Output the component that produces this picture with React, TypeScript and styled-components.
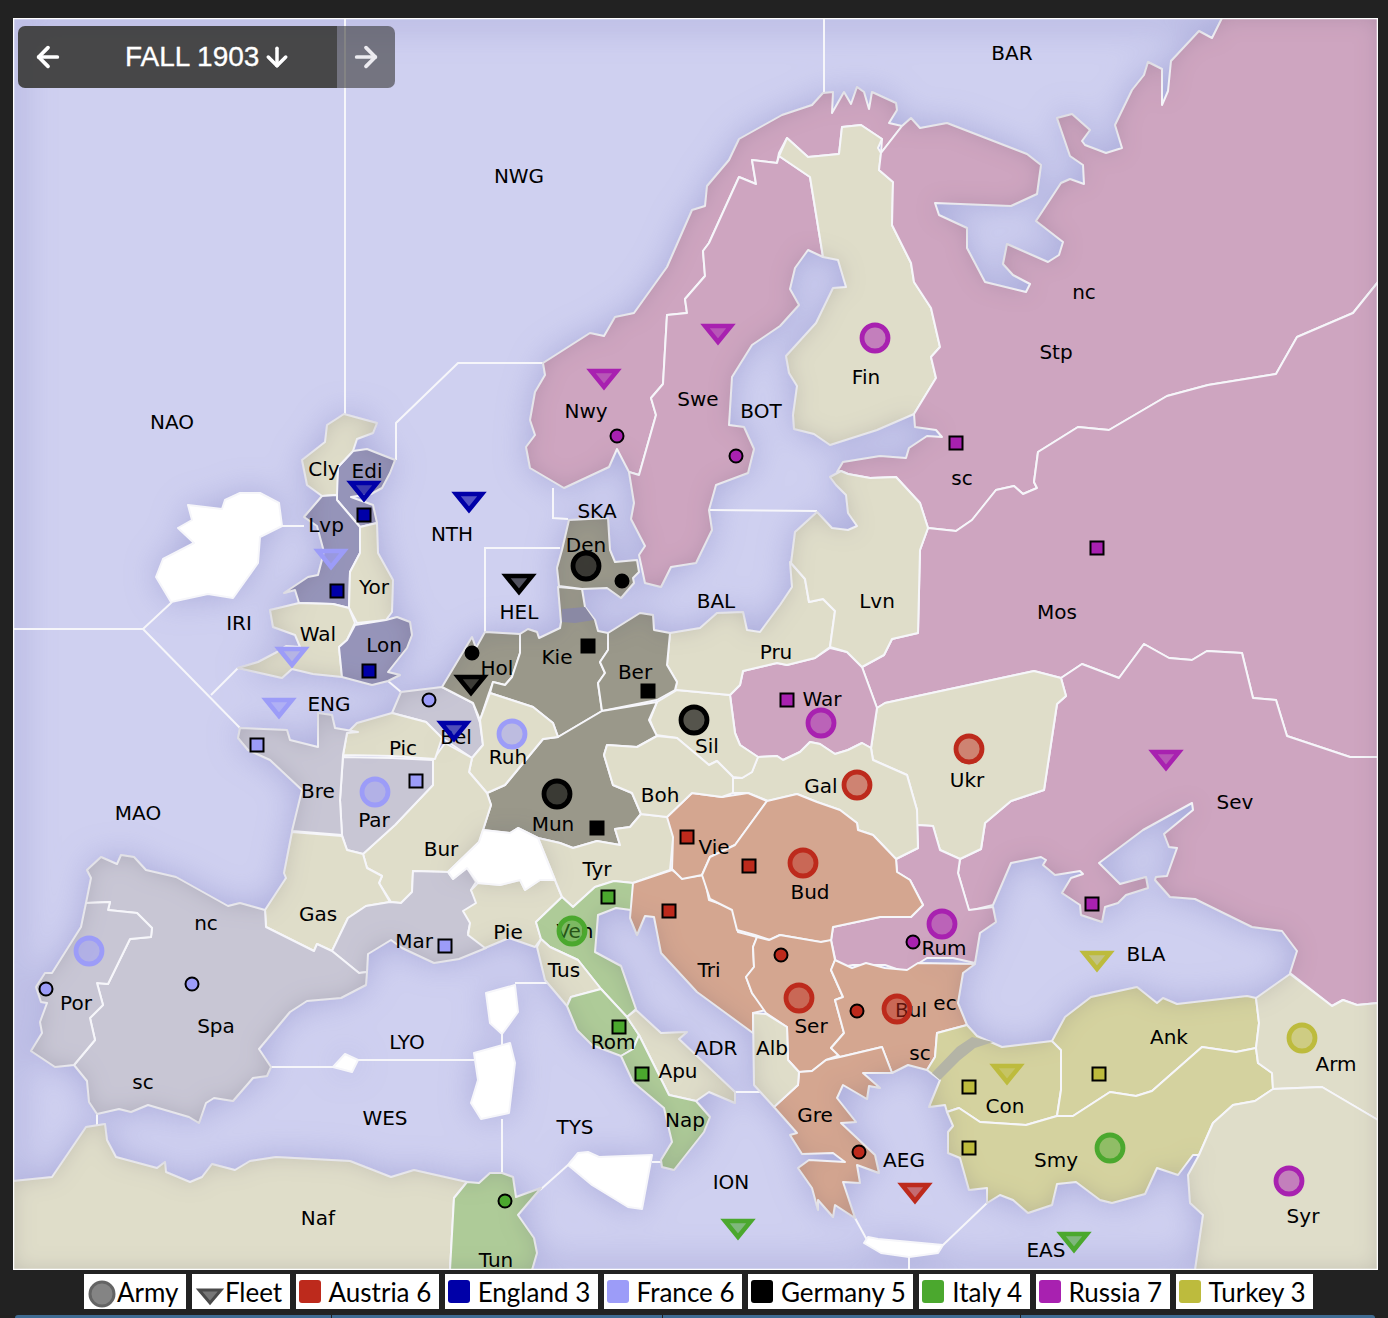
import React from "react";
import styled, { createGlobalStyle } from "styled-components";
import { ArrowDown, ArrowLeft, ArrowRight } from "lucide-react";

const COLORS: Record<string, string> = {
  none: "#dfddc9", rus: "#cea5c0", aus: "#d4a690", ger: "#9a988a", eng: "#9694b9",
  fra: "#c8c6d4", ita: "#aecb98", tur: "#d4d29f",
};
const POWER: Record<string, string> = {
  aus: "#bd2a1c", eng: "#0000a8", fra: "#9c9cf8", ger: "#000000", ita: "#4ba82e", rus: "#a821b0", tur: "#bdbb3d",
};

const PROVINCES: [string, string][] = [
  ["rus", "543,363 590,333 604,336 615,317 634,313 667,267 692,210 705,206 707,186 729,160 739,139 782,115 812,105 823,93 833,92 832,113 844,92 851,104 857,87 864,92 869,109 872,92 896,103 897,110 889,123 902,126 881,153 882,139 861,125 842,127 839,154 808,157 787,138 779,153 777,163 752,160 756,184 739,177 709,243 703,251 705,276 685,299 687,313 667,315 663,384 651,398 656,415 639,475 629,472 617,449 609,467 564,488 530,468 526,447 535,435 530,420 535,392 545,375"],
  ["rus", "779,156 810,177 823,257 808,250 795,268 790,289 799,305 780,326 752,345 732,377 729,425 744,427 754,449 748,473 716,485 709,510 712,530 696,563 671,567 661,587 645,583 639,555 645,546 631,519 634,503 629,472 639,475 656,415 651,398 663,384 667,315 687,313 685,299 705,276 703,251 709,243 739,177 756,184 752,160 777,163"],
  ["none", "787,138 808,157 839,154 842,127 861,125 882,139 878,148 881,153 879,170 893,182 892,225 911,263 914,282 931,308 940,347 931,357 936,378 914,414 877,430 830,445 814,434 794,429 793,415 797,386 789,373 786,356 816,323 833,288 846,287 838,260 823,257 810,177 779,156"],
  ["rus", "902,126 911,118 920,128 947,123 1027,154 1041,165 1037,194 1011,206 935,203 939,215 967,228 967,248 985,282 1026,292 1030,284 1013,275 1003,264 1007,244 1048,262 1059,255 1063,242 1036,221 1061,183 1070,179 1084,184 1083,165 1070,156 1057,118 1072,114 1090,130 1082,141 1085,145 1106,153 1122,148 1115,125 1132,90 1144,75 1148,62 1162,69 1162,105 1168,91 1171,61 1199,31 1212,38 1222,18 1378,18 1378,282 1353,313 1297,337 1276,374 1208,385 1167,396 1109,430 1078,427 1038,452 1034,482 1037,488 1023,494 1014,486 996,490 972,520 956,531 928,528 920,503 896,477 870,478 848,474 841,471 837,472 843,462 880,456 906,458 909,448 927,436 942,437 936,430 915,427 914,414 936,378 931,357 940,347 931,308 914,282 911,263 892,225 893,182 879,170 881,153"],
  ["rus", "928,528 956,531 972,520 996,490 1014,486 1023,494 1037,488 1034,482 1038,452 1078,427 1109,430 1167,396 1208,385 1276,374 1297,337 1353,313 1378,282 1378,757 1350,757 1287,736 1276,700 1253,698 1242,653 1207,651 1192,660 1169,658 1144,644 1119,678 1082,664 1061,678 1034,671 885,703 877,708 862,667 884,655 892,639 918,633 920,550"],
  ["rus", "1061,678 1082,664 1119,678 1144,644 1169,658 1192,660 1207,651 1242,653 1253,698 1276,700 1287,736 1350,757 1378,757 1378,1003 1357,1005 1343,1000 1332,1006 1290,973 1297,951 1282,931 1252,927 1195,899 1170,897 1155,880 1156,877 1167,876 1177,848 1169,847 1164,834 1193,810 1192,803 1143,830 1099,863 1120,884 1146,877 1148,888 1126,895 1118,903 1105,907 1102,922 1081,915 1080,905 1062,893 1071,878 1083,874 1080,871 1055,875 1043,865 1046,860 1041,857 1011,863 993,905 969,911 958,873 960,859 981,849 985,823 1011,801 1044,790 1057,704 1066,696"],
  ["none", "885,703 1034,671 1061,678 1066,696 1057,704 1044,790 1011,801 985,823 981,849 960,859 940,850 933,826 917,825 917,810 907,775 873,760 871,748 877,708"],
  ["rus", "917,825 933,826 940,850 960,859 958,873 969,910 993,907 996,922 980,933 975,963 953,958 927,958 905,972 885,965 853,965 837,968 831,940 833,927 880,917 911,917 923,905 910,880 897,872 896,859 918,848"],
  ["rus", "743,671 777,663 787,665 815,658 830,648 847,652 862,667 877,708 871,748 862,743 848,750 835,754 820,744 810,742 800,752 783,760 777,756 758,757 740,745 735,733 730,695 740,685"],
  ["none", "758,757 777,756 783,760 800,752 810,742 820,744 835,754 848,750 862,743 871,748 873,760 907,775 917,810 918,848 896,859 873,835 858,830 857,823 840,810 817,802 797,794 768,801 748,793 733,793 733,778 742,778 752,772"],
  ["none", "657,702 677,690 730,695 735,733 740,745 758,757 752,772 742,778 733,777 717,761 709,765 677,738 656,735 650,720"],
  ["none", "670,633 700,628 717,613 743,612 747,630 760,632 780,605 792,587 790,562 805,579 809,602 823,599 835,611 830,647 815,658 787,665 777,663 743,671 740,685 730,695 677,690 675,690 677,682 667,665"],
  ["none", "928,528 920,503 896,477 870,478 848,474 841,471 830,477 836,485 846,495 848,513 857,526 848,530 832,528 817,512 795,532 791,563 805,579 809,602 823,599 835,611 830,647 847,652 862,667 884,655 892,639 918,633 920,550"],
  ["eng", "353,451 367,449 395,460 390,473 382,488 371,494 351,497 373,505 377,523 360,527 337,500 337,480 338,467"],
  ["none", "344,414 377,423 373,433 357,439 353,451 338,467 337,495 322,496 307,485 302,460 325,442 327,425"],
  ["eng", "322,496 337,495 337,500 360,527 360,553 350,572 349,608 333,604 299,603 295,590 284,593 308,577 318,575 324,552 317,526 304,517"],
  ["none", "360,527 377,523 378,553 393,580 392,612 386,620 357,623 349,608 350,572 360,553"],
  ["none", "270,610 299,603 333,604 349,608 355,623 347,640 339,647 342,677 313,674 292,669 282,678 238,668 258,662 277,652 286,646 300,647 295,635 273,627"],
  ["eng", "355,625 386,620 397,617 410,622 412,635 407,648 388,672 400,675 388,681 372,685 342,677 339,647 347,640"],
  ["fra", "401,692 442,687 473,703 480,723 483,745 472,758 442,738 426,722 392,713"],
  ["ger", "442,687 472,637 476,648 485,632 520,634 520,653 512,677 505,685 493,682 489,693 480,720 473,703"],
  ["ger", "520,634 528,629 537,632 539,638 560,628 561,622 558,587 582,589 585,607 595,620 598,631 608,633 608,650 600,662 605,673 598,683 602,711 558,737 553,723 533,707 490,693 493,682 505,685 512,677 520,653"],
  ["ger", "569,520 608,518 610,550 615,562 637,560 639,572 633,578 634,583 621,598 607,588 582,589 559,586 557,568 562,550"],
  ["ger", "608,633 640,613 653,615 654,630 670,633 667,665 677,682 675,690 657,700 602,711 598,683 605,673 600,662 608,650"],
  ["ger", "602,711 657,702 649,720 657,736 637,747 607,745 604,755 613,785 632,793 641,814 630,827 615,829 620,845 597,841 573,848 560,843 538,838 518,828 510,833 483,830 491,805 487,793 505,785 543,739 558,737"],
  ["none", "490,693 533,707 553,723 558,737 543,739 505,785 487,793 469,772 472,758 483,745 480,720"],
  ["none", "445,743 472,758 469,772 487,793 491,805 483,830 479,842 448,872 413,871 412,892 401,903 391,902 379,883 382,876 367,868 363,854 395,825 433,785 433,760"],
  ["none", "347,733 357,723 392,713 426,722 442,738 435,759 392,756 343,755"],
  ["fra", "343,757 392,758 433,760 433,785 395,825 363,854 347,850 342,835 340,800"],
  ["fra", "240,728 287,730 290,740 318,747 318,713 332,715 335,728 358,732 347,733 343,755 340,800 342,835 292,831 302,790 270,760 248,750 238,738"],
  ["none", "292,832 342,836 347,850 363,854 367,868 382,876 379,883 390,902 366,906 348,918 332,951 317,944 314,951 266,927 265,910 286,878 284,873"],
  ["fra", "390,902 401,903 412,892 413,871 448,872 453,879 467,868 476,882 471,890 478,903 464,911 471,920 468,933 486,948 459,959 434,963 402,948 391,940 368,954 367,972 359,973 332,951 348,918 366,906"],
  ["fra", "87,870 101,857 117,864 121,855 134,857 146,870 176,877 228,906 240,903 265,910 266,927 314,951 317,944 332,951 359,973 367,972 366,985 341,998 307,1001 290,1012 259,1049 271,1067 267,1076 253,1078 233,1101 214,1098 206,1103 199,1123 189,1117 148,1105 131,1112 119,1109 97,1114 89,1102 87,1081 74,1065 95,1040 90,1018 103,1005 97,983 108,984 130,939 151,937 152,928 137,913 108,910 110,902 86,903 91,878"],
  ["fra", "86,903 110,902 108,910 137,913 152,928 151,937 130,939 108,984 97,983 103,1005 90,1018 95,1040 74,1065 55,1067 31,1051 42,1033 40,1022 47,1003 41,1002 36,987 45,973 52,973 81,927"],
  ["none", "13,1181 52,1177 86,1127 105,1124 107,1140 116,1157 157,1168 165,1162 166,1172 190,1182 202,1177 212,1164 235,1170 250,1161 276,1157 350,1161 391,1177 414,1170 467,1182 454,1198 450,1270 13,1270"],
  ["ita", "454,1198 467,1182 479,1183 490,1173 502,1173 513,1177 516,1197 541,1188 518,1215 534,1238 537,1253 532,1270 450,1270"],
  ["none", "471,890 476,903 463,911 470,923 468,935 485,948 509,938 535,947 541,939 536,922 562,897 555,880 540,880 525,890 520,880 500,885 478,883"],
  ["none", "538,838 560,843 573,848 597,841 620,845 615,829 630,827 641,814 668,817 674,830 670,870 633,883 614,881 595,887 573,907 562,897 555,880"],
  ["ita", "536,922 562,897 573,907 595,887 614,881 633,883 638,888 631,910 616,908 598,915 595,952 621,966 636,1009 627,1017 601,989 578,960 550,947 541,939"],
  ["none", "541,939 537,947 545,980 567,1006 571,997 601,989 578,960 550,947"],
  ["ita", "567,1006 571,997 601,989 627,1017 639,1035 633,1049 621,1056 592,1045 577,1030"],
  ["none", "627,1017 636,1010 661,1033 687,1032 679,1039 735,1092 735,1103 709,1092 696,1101 669,1095 639,1035"],
  ["ita", "621,1056 633,1049 639,1035 669,1095 696,1101 710,1117 704,1132 674,1170 662,1167 661,1160 672,1142 664,1108 633,1082"],
  ["aus", "633,883 672,870 683,878 704,875 709,900 733,908 738,932 757,937 753,947 754,967 746,977 752,993 766,1010 753,1013 753,1033 697,992 661,953 654,917 645,916 637,935 630,918"],
  ["aus", "692,793 722,797 748,793 767,801 735,845 710,857 702,875 682,879 672,869 673,837 667,817"],
  ["none", "607,745 637,747 657,736 677,738 709,765 717,761 733,777 733,793 722,797 692,793 667,817 641,814 632,793 613,785 604,755"],
  ["aus", "767,801 797,794 817,802 840,810 857,823 858,830 873,835 896,859 897,872 910,880 923,905 911,917 880,917 833,927 831,941 820,942 780,935 770,940 755,935 737,930 732,910 710,899 702,875 710,857 735,845"],
  ["aus", "757,937 769,940 780,935 821,942 831,940 835,960 831,970 843,997 835,1000 844,1033 831,1048 840,1055 826,1060 812,1071 799,1072 788,1060 787,1027 766,1013 752,993 746,977 754,967 753,947"],
  ["aus", "835,960 852,968 866,963 885,968 907,970 918,963 975,964 963,973 958,1003 967,1025 937,1033 935,1057 927,1070 908,1065 892,1073 882,1047 840,1057 831,1048 844,1033 835,1000 843,997 831,970"],
  ["aus", "799,1072 812,1071 826,1060 840,1057 882,1047 892,1073 863,1073 880,1088 869,1086 867,1099 843,1085 837,1098 856,1122 841,1123 875,1155 879,1173 857,1165 860,1183 843,1182 855,1218 835,1205 833,1217 818,1200 818,1210 812,1188 798,1168 809,1160 845,1162 833,1153 802,1154 790,1135 797,1133 774,1107 798,1085"],
  ["none", "753,1013 766,1014 787,1027 788,1060 799,1072 798,1085 774,1107 754,1085"],
  ["tur", "967,1025 977,1036 1002,1047 1052,1041 1061,1050 1061,1090 1057,1116 1026,1125 980,1122 959,1108 947,1112 945,1105 929,1107 940,1080 927,1070 935,1057 937,1033"],
  ["tur", "1052,1041 1065,1017 1091,997 1137,987 1157,1003 1163,998 1177,1004 1247,996 1256,998 1259,1023 1256,1048 1236,1052 1202,1047 1152,1091 1136,1096 1110,1092 1073,1116 1057,1116 1061,1090 1061,1050"],
  ["tur", "1057,1116 1073,1116 1110,1092 1136,1096 1152,1091 1202,1047 1236,1052 1256,1048 1258,1063 1272,1073 1273,1089 1255,1101 1233,1105 1213,1123 1199,1155 1193,1155 1178,1175 1157,1168 1145,1194 1112,1203 1100,1200 1076,1182 1057,1184 1052,1205 1028,1213 1013,1200 1000,1195 987,1203 987,1188 969,1190 960,1158 948,1153 948,1132 953,1126 947,1112 959,1108 980,1122 1026,1125"],
  ["none", "1256,998 1290,974 1332,1006 1343,1000 1357,1005 1378,1003 1378,1120 1322,1087 1273,1089 1272,1073 1258,1063 1256,1048 1259,1023"],
  ["none", "1273,1089 1322,1087 1378,1120 1378,1270 1195,1270 1203,1215 1190,1203 1188,1175 1199,1155 1213,1123 1233,1105 1255,1101"],
];

const IMPASSABLE = [
  "171,602 156,577 163,559 194,543 178,528 192,520 188,505 222,509 225,500 240,493 260,493 279,503 282,526 260,537 258,563 233,598 208,594",
  "448,872 479,842 483,830 510,833 518,828 538,838 555,880 540,880 525,890 520,880 500,885 478,883 467,868 453,879",
  "486,993 515,985 518,1012 502,1034 490,1023",
  "474,1053 510,1043 515,1063 509,1113 481,1119 471,1103 478,1080",
  "333,1067 345,1054 358,1060 352,1072",
  "568,1165 578,1153 588,1152 599,1157 652,1155 642,1209 628,1207 592,1185",
  "864,1243 868,1237 878,1239 943,1245 938,1253 909,1257 881,1253",
];

const SEA_LINES = [
  "345,18 345,415", "824,18 824,93", "396,460 396,423 458,363 543,363", "553,488 553,518 568,519",
  "485,632 485,548 560,548", "709,510 817,511", "13,629 143,629 172,602", "143,629 240,728", "211,695 238,668",
  "282,526 304,526", "388,681 401,692", "271,1067 333,1067", "358,1060 474,1060", "502,1034 502,1050",
  "515,983 547,983", "502,1119 502,1173", "540,1190 568,1165", "652,1162 662,1162", "735,1092 762,1092",
  "855,1218 867,1240", "909,1257 909,1270", "943,1245 987,1203", "97,1114 97,1126",
];

const LABELS: [string, number, number][] = [
  ["NWG", 519, 176], ["BAR", 1012, 53], ["NAO", 172, 422], ["NTH", 452, 534], ["SKA", 597, 511], ["HEL", 519, 612],
  ["Den", 586, 545], ["BAL", 716, 601], ["Pru", 776, 652], ["Lvn", 877, 601], ["Mos", 1057, 612], ["Stp", 1056, 352],
  ["nc", 1084, 292], ["sc", 962, 478], ["Fin", 866, 377], ["Swe", 698, 399], ["Nwy", 586, 411], ["BOT", 761, 411],
  ["Cly", 324, 469], ["Edi", 367, 471], ["Lvp", 326, 525], ["Yor", 374, 587], ["IRI", 239, 623], ["Wal", 318, 634],
  ["Lon", 384, 645], ["ENG", 329, 704], ["Hol", 497, 668], ["Kie", 557, 657], ["Ber", 635, 672], ["Bel", 456, 737],
  ["Ruh", 508, 757], ["Sil", 707, 746], ["War", 822, 699], ["Gal", 821, 786], ["Ukr", 967, 780], ["Pic", 403, 748],
  ["Bre", 318, 791], ["Par", 374, 820], ["Boh", 660, 795], ["Mun", 553, 824], ["Vie", 714, 847], ["Sev", 1235, 802],
  ["MAO", 138, 813], ["Bur", 441, 849], ["Tyr", 597, 869], ["Bud", 810, 892], ["Gas", 318, 914], ["nc", 206, 923],
  ["Mar", 414, 941], ["Pie", 508, 932], ["Ven", 575, 931], ["BLA", 1146, 954], ["Rum", 944, 948], ["Por", 76, 1003],
  ["Spa", 216, 1026], ["Tri", 709, 970], ["Tus", 564, 970], ["ec", 945, 1003], ["Bul", 911, 1010], ["Ser", 811, 1026],
  ["Ank", 1169, 1037], ["Arm", 1336, 1064], ["sc", 920, 1053], ["Rom", 613, 1042], ["ADR", 716, 1048], ["Alb", 772, 1048],
  ["LYO", 407, 1042], ["Apu", 678, 1071], ["sc", 143, 1082], ["Con", 1005, 1106], ["WES", 385, 1118], ["Gre", 815, 1115],
  ["Nap", 685, 1120], ["TYS", 575, 1127], ["AEG", 904, 1160], ["Smy", 1056, 1160], ["ION", 731, 1182], ["Naf", 318, 1218],
  ["Syr", 1303, 1216], ["EAS", 1046, 1250], ["Tun", 496, 1260],
];

const SQUARES: [number, number, string][] = [
  [364, 515, "eng"], [337, 591, "eng"], [369, 671, "eng"], [257, 745, "fra"], [416, 781, "fra"], [445, 946, "fra"],
  [588, 646, "ger"], [648, 691, "ger"], [597, 828, "ger"], [608, 897, "ita"], [619, 1027, "ita"], [642, 1074, "ita"],
  [687, 837, "aus"], [749, 866, "aus"], [669, 911, "aus"], [787, 700, "rus"], [956, 443, "rus"], [1097, 548, "rus"],
  [1092, 904, "rus"], [969, 1087, "tur"], [1099, 1074, "tur"], [969, 1148, "tur"],
];
const DOTS: [number, number, string][] = [
  [617, 436, "rus"], [736, 456, "rus"], [472, 653, "ger"], [622, 581, "ger"], [429, 700, "fra"], [46, 989, "fra"],
  [192, 984, "fra"], [505, 1201, "ita"], [781, 955, "aus"], [857, 1011, "aus"], [859, 1152, "aus"], [913, 942, "rus"],
];
const ARMIES: [number, number, string][] = [
  [586, 566, "ger"], [694, 720, "ger"], [557, 794, "ger"], [512, 734, "fra"], [375, 792, "fra"], [89, 951, "fra"],
  [572, 931, "ita"], [1110, 1148, "ita"], [803, 863, "aus"], [857, 785, "aus"], [969, 749, "aus"], [799, 998, "aus"],
  [897, 1009, "aus"], [875, 338, "rus"], [821, 723, "rus"], [942, 924, "rus"], [1289, 1181, "rus"], [1302, 1038, "tur"],
];
const FLEETS: [number, number, string][] = [
  [364, 491, "eng"], [469, 502, "eng"], [454, 731, "eng"], [331, 559, "fra"], [292, 657, "fra"], [279, 708, "fra"],
  [519, 584, "ger"], [471, 685, "ger"], [604, 379, "rus"], [718, 334, "rus"], [1166, 760, "rus"], [915, 1193, "aus"],
  [738, 1229, "ita"], [1074, 1242, "ita"], [1097, 961, "tur"], [1007, 1074, "tur"],
];

const LEGEND: [string, string][] = [
  ["Austria 6", "aus"], ["England 3", "eng"], ["France 6", "fra"], ["Germany 5", "ger"],
  ["Italy 4", "ita"], ["Russia 7", "rus"], ["Turkey 3", "tur"],
];

const Global = createGlobalStyle`
  html, body { margin: 0; height: 1318px; overflow: hidden; background: #222222; }
`;

const Page = styled.div`
  width: 1388px;
  height: 1318px;
  padding-top: 18px;
  box-sizing: border-box;
  display: flex;
  flex-direction: column;
  background: #222222;
`;

const MapFrame = styled.div`
  position: relative;
  width: 1365px;
  height: 1252px;
  margin-left: 13px;
`;

const MapCanvas = styled.svg`
  display: block;
  width: 1365px;
  height: 1252px;
`;

const Province = styled.polygon`
  stroke: #f6f6fa;
  stroke-width: 2;
  stroke-linejoin: round;
`;

const SeaLine = styled.polyline`
  fill: none;
  stroke: #f6f6fa;
  stroke-width: 2;
`;

const Label = styled.text`
  font-family: "DejaVu Sans", sans-serif;
  font-size: 20px;
  fill: #000;
  text-anchor: middle;
  dominant-baseline: central;
`;

const Nav = styled.div`
  position: absolute;
  left: 5px;
  top: 8px;
  width: 377px;
  height: 62px;
  display: flex;
  border-radius: 7px;
  overflow: hidden;
  color: #fff;
`;

const NavMain = styled.div`
  width: 319px;
  display: flex;
  align-items: center;
  background: rgba(66, 66, 66, 0.97);
`;

const NavBack = styled.div`
  width: 60px;
  display: flex;
  justify-content: center;
`;

const Season = styled.div`
  margin-left: 47px;
  display: flex;
  align-items: center;
  gap: 3px;
  font: 500 28px "Liberation Sans", Arial, sans-serif;
  -webkit-text-stroke: 0.3px #fff;
  white-space: nowrap;
`;

const NavNext = styled.div`
  flex: 1;
  display: flex;
  align-items: center;
  justify-content: center;
  background: rgba(60, 60, 60, 0.62);
  color: #ecebf0;
`;

const Legend = styled.div`
  display: flex;
  gap: 6px;
  margin: 4px 0 0 84px;
  height: 35px;
`;

const LegendItem = styled.div`
  position: relative;
  display: flex;
  align-items: center;
  background: #fff;
  padding: 0 7.4px 0 3px;
  font: 26px Lato, "Liberation Sans", sans-serif;
  color: #000;
  white-space: nowrap;
`;

const Swatch = styled.span<{ $color: string }>`
  width: 22px;
  height: 23px;
  margin-right: 8px;
  border-radius: 3px;
  background: ${(p) => p.$color};
`;

const LegendIcon = styled.svg`
  display: block;
  width: 30px;
  height: 30px;
  margin-top: 5px;
  background: #fff;
`;

const TabBar = styled.div`
  display: flex;
  margin: 6px 0 0 15px;
  width: 1360px;
  height: 8px;
  border-radius: 6px 6px 0 0;
  overflow: hidden;
  gap: 1px;
  background: #222222;
`;

const Tab = styled.div<{ $w: number }>`
  width: ${(p) => p.$w}px;
  background: #3f6b92;
`;

const glow = [...PROVINCES.map((p) => p[1]), ...IMPASSABLE];

export default function App() {
  return (
    <Page>
      <Global />
      <MapFrame>
        <MapCanvas viewBox="13 18 1365 1252">
          <defs>
            <filter id="seaBlur" filterUnits="userSpaceOnUse" x="-40" y="-40" width="1500" height="1400">
              <feGaussianBlur stdDeviation="17" />
            </filter>
            <filter id="landShade" filterUnits="userSpaceOnUse" x="-40" y="-40" width="1500" height="1400">
              <feGaussianBlur in="SourceAlpha" stdDeviation="11" result="b" />
              <feFlood floodColor="#5c5470" floodOpacity="0.34" />
              <feComposite in2="b" operator="out" />
              <feComposite in2="SourceAlpha" operator="in" result="s" />
              <feMerge>
                <feMergeNode in="SourceGraphic" />
                <feMergeNode in="s" />
              </feMerge>
            </filter>
            <clipPath id="mapClip">
              <rect x="13" y="18" width="1365" height="1252" />
            </clipPath>
          </defs>
          <g clipPath="url(#mapClip)">
            <rect x="13" y="18" width="1365" height="1252" fill="#cfd0f0" />
            <g filter="url(#seaBlur)" opacity="0.8">
              <rect x="13" y="18" width="1365" height="1252" fill="none" stroke="#a0a1d4" strokeWidth="16" />
              {glow.map((pts, i) => (
                <polygon key={i} points={pts} fill="#a0a1d4" />
              ))}
            </g>
            {SEA_LINES.map((pts, i) => (
              <SeaLine key={i} points={pts} />
            ))}
            <g filter="url(#landShade)">
              {PROVINCES.map(([own, pts], i) => (
                <Province key={i} points={pts} fill={COLORS[own]} />
              ))}
            </g>
            <polygon points="562,609 585,607 594,620 575,623 562,622" fill="#8a89a4" />
            <polygon points="932,1073 957,1047 972,1037 993,1042 975,1048 960,1060 940,1080" fill="#b4b4a6" />
            {IMPASSABLE.map((pts, i) => (
              <Province key={i} points={pts} fill="#ffffff" />
            ))}
            {LABELS.map(([t, x, y], i) => (
              <Label key={i} x={x} y={y}>{t}</Label>
            ))}
            {SQUARES.map(([x, y, c], i) => (
              <rect key={i} x={x - 6.5} y={y - 6.5} width={13} height={13} fill={POWER[c]} stroke="#000" strokeWidth={2} />
            ))}
            {DOTS.map(([x, y, c], i) => (
              <circle key={i} cx={x} cy={y} r={6.5} fill={POWER[c]} stroke="#000" strokeWidth={2} />
            ))}
            {ARMIES.map(([x, y, c], i) => (
              <circle key={i} cx={x} cy={y} r={13} fill={POWER[c]} fillOpacity={c === "ger" ? 0.62 : 0.5} stroke={POWER[c]} strokeWidth={4.8} />
            ))}
            {FLEETS.map(([x, y, c], i) => (
              <polygon
                key={i}
                points={`${x - 13},${y - 8} ${x + 13},${y - 8} ${x},${y + 8}`}
                fill={POWER[c]}
                fillOpacity={0.6}
                stroke={POWER[c]}
                strokeWidth={4.5}
              />
            ))}
            <rect x="13.5" y="18.5" width="1364" height="1251" fill="none" stroke="#ffffff" strokeWidth="1.5" />
          </g>
        </MapCanvas>
        <Nav>
          <NavMain>
            <NavBack><ArrowLeft size={32} strokeWidth={2.8} /></NavBack>
            <Season>
              FALL 1903
              <ArrowDown size={30} strokeWidth={2.8} />
            </Season>
          </NavMain>
          <NavNext><ArrowRight size={32} strokeWidth={2.8} /></NavNext>
        </Nav>
      </MapFrame>
      <Legend>
        <LegendItem>
          <LegendIcon viewBox="0 0 30 30">
            <circle cx="15" cy="15" r="12" fill="#6f6f6f" stroke="#4a4a4a" strokeWidth="3" opacity="0.85" />
          </LegendIcon>
          Army
        </LegendItem>
        <LegendItem>
          <LegendIcon viewBox="0 0 30 30">
            <polygon points="4,11 26,11 15,24" fill="#777" stroke="#4a4a4a" strokeWidth="3" />
          </LegendIcon>
          Fleet
        </LegendItem>
        {LEGEND.map(([t, c]) => (
          <LegendItem key={c}>
            <Swatch $color={POWER[c]} />
            {t}
          </LegendItem>
        ))}
      </Legend>
      <TabBar>
        <Tab $w={316} />
        <Tab $w={330} />
        <Tab $w={357} />
        <Tab $w={354} />
      </TabBar>
    </Page>
  );
}
